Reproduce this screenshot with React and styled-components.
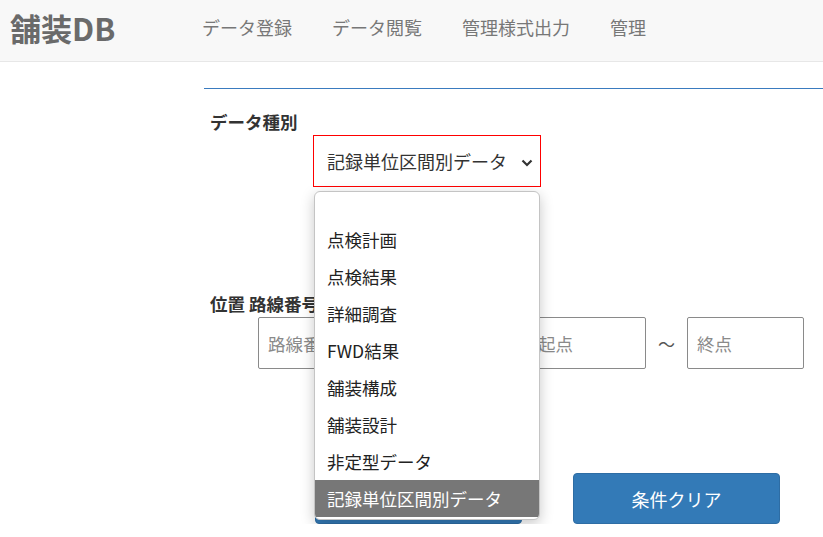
import styled, { createGlobalStyle } from "styled-components";

const GlobalStyle = createGlobalStyle`
  body {
    margin: 0;
    background: #fff;
    font-family: "Noto Sans CJK JP", "Noto Sans", sans-serif;
    color: #333;
  }
`;

const navItems = ["データ登録", "データ閲覧", "管理様式出力", "管理"];
const options = [
  "",
  "点検計画",
  "点検結果",
  "詳細調査",
  "FWD結果",
  "舗装構成",
  "舗装設計",
  "非定型データ",
  "記録単位区間別データ",
];
const selected = "記録単位区間別データ";

const App = () => {
  return (
    <>
      <GlobalStyle />
      <Header>
        <Logo>舗装DB</Logo>
        <Nav>
          {navItems.map((item) => (
            <NavItem key={item}>{item}</NavItem>
          ))}
        </Nav>
      </Header>

      <Main>
        <Label>データ種別</Label>
        <SelectRow>
          <SelectWrap>
            <SelectBox>
              <span>{selected}</span>
              <Chevron viewBox="0 0 12 8">
                <path d="M1.5 1.5 L6 6 L10.5 1.5" />
              </Chevron>
            </SelectBox>
            <Menu>
              {options.map((opt, i) => (
                <MenuItem key={i} $empty={!opt} $active={opt === selected}>
                  {opt}
                </MenuItem>
              ))}
            </Menu>
          </SelectWrap>
        </SelectRow>

        <Label $top={106}>位置 路線番号・区間</Label>
        <InputRow>
          <TextInput $w={250} placeholder="路線番号" />
          <TextInput $w={118} $ml={20} placeholder="起点" />
          <Tilde>～</Tilde>
          <TextInput $w={117} placeholder="終点" />
        </InputRow>

        <ButtonRow>
          <Button>検索</Button>
          <Button>条件クリア</Button>
        </ButtonRow>
      </Main>
    </>
  );
};

const Header = styled.header`
  height: 61px;
  background: #f8f8f8;
  border-bottom: 1px solid #e7e7e7;
  display: flex;
  align-items: center;
`;

const Logo = styled.div`
  font-size: 31px;
  font-weight: 700;
  color: #6a6a6a;
  padding-left: 10px;
  width: 172px;
  line-height: 1;
  margin-top: -6px;
`;

const Nav = styled.nav`
  display: flex;
  gap: 40px;
  margin-left: 20px;
  margin-top: -7px;
`;

const NavItem = styled.a`
  font-size: 18px;
  color: #777;
  cursor: pointer;
`;

const Main = styled.main`
  margin: 26px 0 0 204px;
  border-top: 1px solid #3a7bbf;
`;

const Label = styled.div`
  font-size: 17.5px;
  font-weight: 700;
  color: #333;
  padding-left: 6px;
  line-height: 22px;
  margin-top: ${({ $top }) => ($top ? $top : 22)}px;
`;

const SelectRow = styled.div`
  margin: 2px 0 0 109px;
`;

const SelectWrap = styled.div`
  position: relative;
  width: 228px;
`;

const SelectBox = styled.div`
  height: 52px;
  box-sizing: border-box;
  border: 1px solid #ff0000;
  display: flex;
  align-items: center;
  justify-content: space-between;
  padding: 0 7px 0 13px;
  font-size: 18px;
  color: #333;
`;

const Chevron = styled.svg`
  width: 12px;
  height: 8px;
  fill: none;
  stroke: #333;
  stroke-width: 2.2;
  margin-top: 3px;
`;

const Menu = styled.ul`
  position: absolute;
  top: 56px;
  left: 1px;
  width: 226px;
  box-sizing: border-box;
  margin: 0;
  padding: 0 0 2px;
  list-style: none;
  background: #fff;
  border: 1px solid #c4c4c4;
  border-radius: 6px;
  box-shadow: 0 4px 14px rgba(0, 0, 0, 0.22);
  overflow: hidden;
  z-index: 10;
`;

const MenuItem = styled.li`
  height: ${({ $empty }) => ($empty ? 29 : 37)}px;
  line-height: 37px;
  padding-left: 12px;
  font-size: 17.5px;
  white-space: nowrap;
  color: ${({ $active }) => ($active ? "#fff" : "#222")};
  background: ${({ $active }) => ($active ? "#777" : "transparent")};
`;

const InputRow = styled.div`
  display: flex;
  align-items: center;
  margin: 2px 0 0 54px;
`;

const TextInput = styled.input`
  width: ${({ $w }) => $w}px;
  height: 52px;
  box-sizing: border-box;
  margin-left: ${({ $ml }) => $ml || 0}px;
  border: 1px solid #8a8a8a;
  border-radius: 2px;
  padding: 0 9px;
  font-size: 17.5px;
  font-family: "Noto Sans CJK JP", sans-serif;
  color: #333;
  &::placeholder {
    color: #8a8a8a;
  }
`;

const Tilde = styled.span`
  width: 41px;
  text-align: center;
  font-size: 17px;
  color: #555;
`;

const ButtonRow = styled.div`
  display: flex;
  gap: 51px;
  margin: 104px 0 0 111px;
`;

const Button = styled.button`
  width: 207px;
  height: 51px;
  border: 1px solid #2e6da4;
  border-radius: 4px;
  background: #337ab7;
  color: #fff;
  font-size: 18px;
  font-family: "Noto Sans CJK JP", sans-serif;
`;

export default App;
